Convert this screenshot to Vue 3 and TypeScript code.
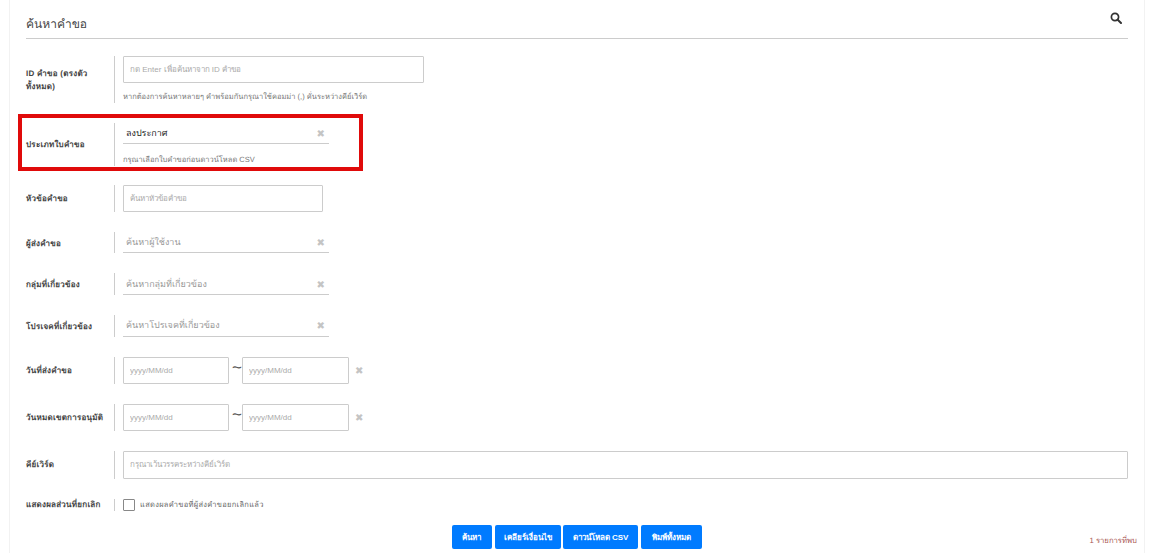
<script setup lang="ts">
const buttons: string[] = ['ค้นหา', 'เคลียร์เงื่อนไข', 'ดาวน์โหลด CSV', 'พิมพ์ทั้งหมด']
</script>

<template>
  <div class="page">
    <section class="card">
      <header class="head">
        <h2 class="title">ค้นหาคำขอ</h2>
        <svg class="search" viewBox="0 0 12 12" width="12" height="12" aria-hidden="true">
          <circle cx="5" cy="5" r="3.6" fill="none" stroke="#333" stroke-width="1.7" />
          <path d="M7.7 7.7 L11 11" stroke="#333" stroke-width="2" stroke-linecap="round" />
        </svg>
      </header>

      <div class="row r1">
        <label class="lab">ID คำขอ (ตรงตัวทั้งหมด)</label>
        <div class="ctl">
          <input class="box w300" placeholder="กด Enter เพื่อค้นหาจาก ID คำขอ" />
          <p class="hint">หากต้องการค้นหาหลายๆ คำพร้อมกันกรุณาใช้คอมม่า (,) คั่นระหว่างคีย์เวิร์ด</p>
        </div>
      </div>

      <div class="row r2">
        <label class="lab">ประเภทใบคำขอ</label>
        <div class="ctl">
          <div class="sel s21 val"><span>ลงประกาศ</span><i class="x">✖</i></div>
          <p class="hint h2">กรุณาเลือกใบคำขอก่อนดาวน์โหลด CSV</p>
        </div>
        <div class="mark"></div>
      </div>

      <div class="row r3">
        <label class="lab">หัวข้อคำขอ</label>
        <div class="ctl"><input class="box w200" placeholder="ค้นหาหัวข้อคำขอ" /></div>
      </div>

      <div class="row r4">
        <label class="lab">ผู้ส่งคำขอ</label>
        <div class="ctl"><div class="sel s21"><span>ค้นหาผู้ใช้งาน</span><i class="x">✖</i></div></div>
      </div>

      <div class="row r5">
        <label class="lab">กลุ่มที่เกี่ยวข้อง</label>
        <div class="ctl"><div class="sel s22"><span>ค้นหากลุ่มที่เกี่ยวข้อง</span><i class="x">✖</i></div></div>
      </div>

      <div class="row r6">
        <label class="lab">โปรเจคที่เกี่ยวข้อง</label>
        <div class="ctl"><div class="sel s22"><span>ค้นหาโปรเจคที่เกี่ยวข้อง</span><i class="x">✖</i></div></div>
      </div>

      <div class="row r7">
        <label class="lab">วันที่ส่งคำขอ</label>
        <div class="ctl dates">
          <input class="box date" placeholder="yyyy/MM/dd" />
          <span class="tilde">~</span>
          <input class="box date" placeholder="yyyy/MM/dd" />
          <i class="x dx">✖</i>
        </div>
      </div>

      <div class="row r8">
        <label class="lab">วันหมดเขตการอนุมัติ</label>
        <div class="ctl dates">
          <input class="box date" placeholder="yyyy/MM/dd" />
          <span class="tilde">~</span>
          <input class="box date" placeholder="yyyy/MM/dd" />
          <i class="x dx">✖</i>
        </div>
      </div>

      <div class="row r9">
        <label class="lab">คีย์เวิร์ด</label>
        <div class="ctl grow"><input class="box full" placeholder="กรุณาเว้นวรรคระหว่างคีย์เวิร์ด" /></div>
      </div>

      <div class="row r10">
        <label class="lab">แสดงผลส่วนที่ยกเลิก</label>
        <div class="ctl check">
          <span class="cb"></span>
          <span class="cbt">แสดงผลคำขอที่ผู้ส่งคำขอยกเลิกแล้ว</span>
        </div>
      </div>

      <footer class="foot">
        <div class="btns">
          <button v-for="b in buttons" :key="b" class="btn" type="button">{{ b }}</button>
        </div>
        <span class="count">1 รายการที่พบ</span>
      </footer>
    </section>
  </div>
</template>

<style scoped>
.page {
  width: 1156px;
  height: 553px;
  overflow: hidden;
  background: #fff;
  font-family: "Liberation Sans", "Noto Sans", "Open Sans", sans-serif;
  text-rendering: geometricPrecision;
  color: #333;
}
.card {
  position: relative;
  box-sizing: border-box;
  width: 1136px;
  height: 553px;
  margin-left: 9px;
  padding: 0 16px;
  border-left: 1px solid #f2f2f2;
  border-right: 1px solid #f2f2f2;
}
.head {
  display: flex;
  justify-content: space-between;
  align-items: flex-start;
  height: 38px;
  border-bottom: 1px solid #ccc;
  margin-bottom: 17px;
}
.title {
  margin: 15px 0 0;
  font-size: 12px;
  line-height: 18px;
  font-weight: 400;
  color: #444;
}
.search {
  margin: 12px 6px 0 0;
}
.row {
  position: relative;
  display: flex;
  align-items: stretch;
}
.lab {
  box-sizing: border-box;
  width: 89px;
  flex: none;
  display: block;
  border-right: 1px solid #ccc;
  padding-right: 14px;
  font-size: 8px;
  line-height: 13px;
  font-weight: 700;
  letter-spacing: 0.25px;
  color: #444;
}
.ctl { margin-left: 8px; }
.r1 { height: 47px; margin-bottom: 20px; }
.r1 .lab { padding-top: 11px; padding-right: 6px; }
.r2 { height: 43px; margin-bottom: 19px; }
.r2 .lab { padding-top: 15px; }
.r3 { height: 27px; margin-bottom: 20px; }
.r3 .lab { padding-top: 7px; }
.r4 { height: 21px; margin-bottom: 20px; }
.r4 .lab { padding-top: 5px; }
.r5 { height: 22px; margin-bottom: 20px; }
.r5 .lab { padding-top: 5px; }
.r5 .sel { padding-top: 1px; }
.r6 { height: 22px; margin-bottom: 20px; }
.r6 .lab { padding-top: 5px; }
.r7 { height: 27px; margin-bottom: 20px; }
.r7 .lab { padding-top: 7px; }
.r8 { height: 27px; margin-bottom: 20px; }
.r8 .lab { padding-top: 7px; padding-right: 0; white-space: nowrap; }
.r9 { height: 28px; margin-bottom: 20px; }
.r9 .lab { padding-top: 7px; }
.r10 { height: 12px; margin-bottom: 14px; }
.r10 .lab { padding-top: 0; line-height: 12px; white-space: nowrap; padding-right: 0; }
.box {
  display: block;
  box-sizing: border-box;
  height: 27px;
  padding: 0 6px 1px;
  border: 1px solid #ccc;
  border-radius: 1px;
  outline: none;
  background: #fff;
  font-family: inherit;
  font-size: 8px;
  color: #333;
}
.box::placeholder { color: #aaa; opacity: 1; }
.w300 { width: 301px; }
.w200 { width: 200px; }
.grow { flex: 1; }
.full { width: 100%; height: 28px; }
.hint {
  margin: 7px 0 0;
  font-size: 7.5px;
  line-height: 13px;
  color: #777;
}
.h2 { margin-top: 9px; }
.sel {
  box-sizing: border-box;
  width: 206px;
  display: flex;
  justify-content: space-between;
  align-items: center;
  padding: 0 4px 1px 3px;
  border-bottom: 1px solid #ccc;
  font-size: 9px;
  color: #999;
}
.sel .x { margin-top: 4px; }
.s21 { height: 21px; }
.s22 { height: 22px; }
.val { color: #222; padding-top: 1px; }
.x {
  font-style: normal;
  font-size: 10px;
  line-height: 1;
  color: #c4c4c4;
}
.dates { display: flex; align-items: flex-start; }
.date { width: 106px; }
.date + .tilde + .date { width: 107px; }
.tilde {
  width: 13px;
  text-align: right;
  font-size: 17px;
  line-height: 21px;
  color: #555;
}
.dx { margin: 10px 0 0 6px; }
.check { display: flex; align-items: center; }
.cb {
  box-sizing: border-box;
  width: 12px;
  height: 12px;
  border: 1px solid #888;
  border-radius: 1px;
}
.cbt {
  margin-left: 5px;
  font-size: 7.5px;
  letter-spacing: 0.3px;
  color: #666;
}
.foot {
  position: relative;
  display: flex;
  justify-content: center;
  align-items: flex-start;
}
.btns {
  display: flex;
  gap: 3px;
}
.btn {
  height: 24px;
  padding: 0 10px;
  border: 0;
  border-radius: 2px;
  background: #007bff;
  color: #fff;
  font-family: inherit;
  font-size: 8px;
  font-weight: 700;
}
.btn:first-child { padding: 0 10.5px; }
.btn:nth-child(2) { padding: 0 9px; margin-right: -1px; }
.btn:last-child { padding: 0 11px; }
.count {
  position: absolute;
  right: -9px;
  top: 10px;
  font-size: 7.7px;
  line-height: 12px;
  color: #a8554f;
}
.mark {
  position: absolute;
  left: -8px;
  top: -9px;
  width: 345px;
  height: 57px;
  box-sizing: border-box;
  border: 4px solid #e00a0a;
  pointer-events: none;
}
</style>
